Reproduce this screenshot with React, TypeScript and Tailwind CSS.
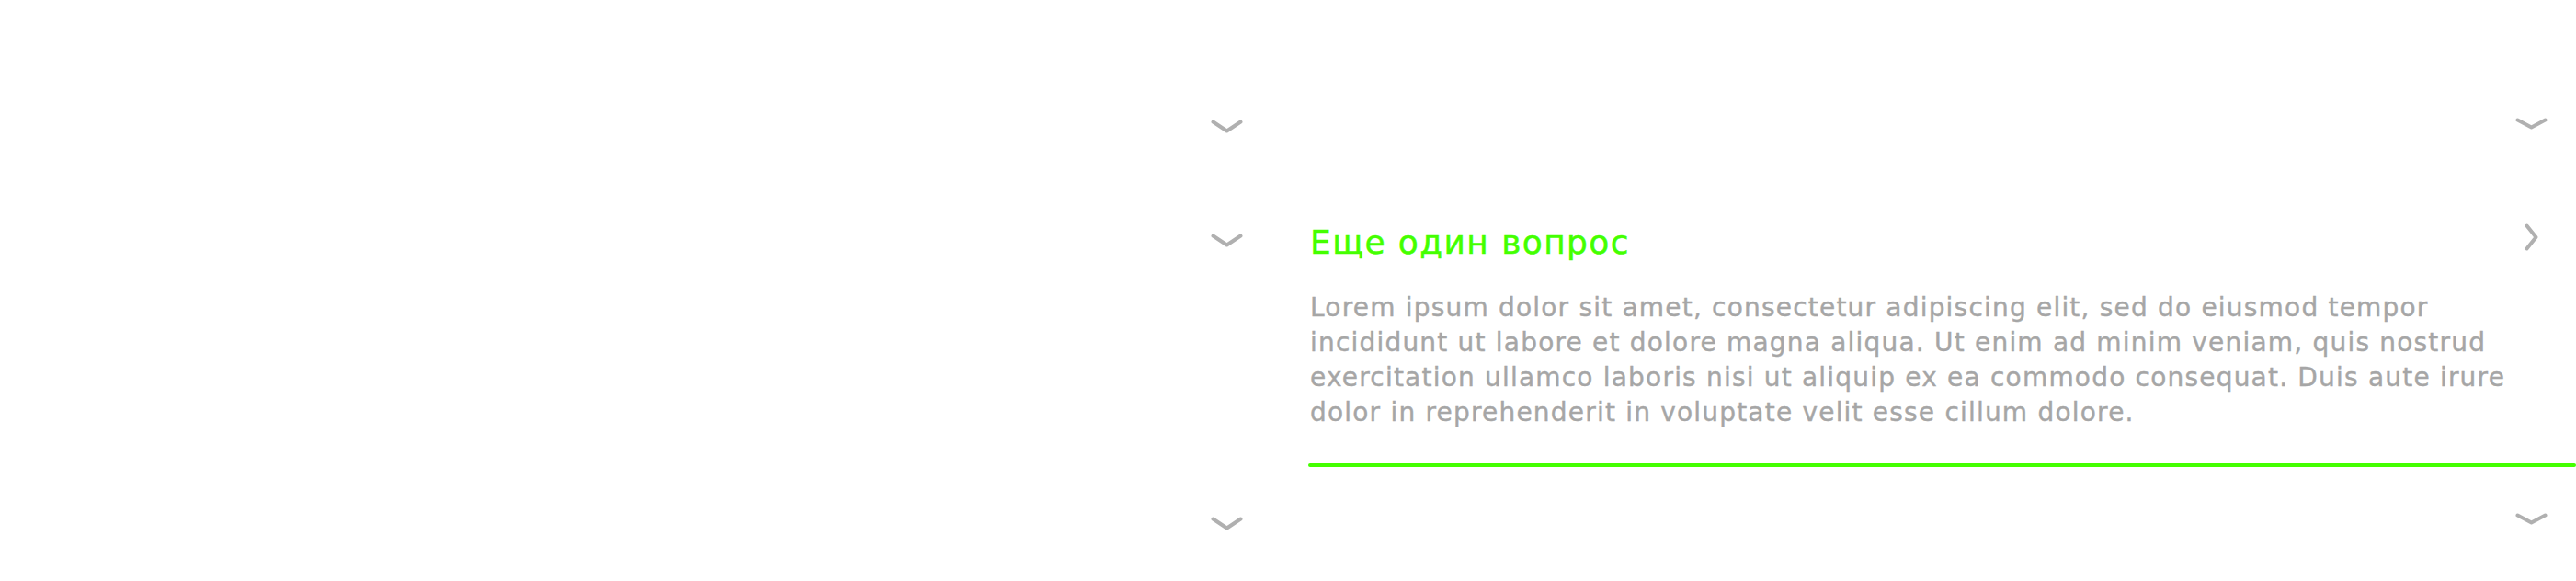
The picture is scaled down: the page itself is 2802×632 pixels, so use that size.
import React from "react";

const GRAY = "#b0b0b0";

function ChevronDown({ h = 15 }: { h?: number }) {
  return (
    <svg width={35} height={h} viewBox={`0 0 35 ${h}`} fill="none">
      <path
        d={`M2.5 2.5 L17.5 ${h - 2.5} L32.5 2.5`}
        stroke={GRAY}
        strokeWidth={4}
        strokeLinecap="round"
        strokeLinejoin="round"
      />
    </svg>
  );
}

function ChevronRight() {
  return (
    <svg width={15} height={30} viewBox="0 0 15 30" fill="none">
      <path
        d="M2.5 2.5 L12.5 15 L2.5 27.5"
        stroke={GRAY}
        strokeWidth={4}
        strokeLinecap="round"
        strokeLinejoin="round"
      />
    </svg>
  );
}

const lines = [
  "Lorem ipsum dolor sit amet, consectetur adipiscing elit, sed do eiusmod tempor",
  "incididunt ut labore et dolore magna aliqua. Ut enim ad minim veniam, quis nostrud",
  "exercitation ullamco laboris nisi ut aliquip ex ea commodo consequat. Duis aute irure",
  "dolor in reprehenderit in voluptate velit esse cillum dolore.",
];

export default function App() {
  return (
    <div
      className="flex w-[2802px] h-[632px] bg-white overflow-hidden"
      style={{ fontFamily: '"DejaVu Sans", "Noto Sans", sans-serif' }}
    >
      {/* left column */}
      <div className="w-[1401px] flex flex-col items-end pr-[49px] pt-[130px]">
        <ChevronDown h={15} />
        <div className="mt-[109px]">
          <ChevronDown h={15} />
        </div>
        <div className="mt-[293px]">
          <ChevronDown h={15} />
        </div>
      </div>

      {/* right column */}
      <div className="flex-1 pl-[22px] pt-[104px]">
        <div className="flex items-center justify-end h-[60px] pr-[31px]">
          <div className="w-[35px] flex justify-center">
            <ChevronDown h={13} />
          </div>
        </div>

        <div className="mt-[65px]">
          <div className="flex items-center justify-between h-[60px] pr-[31px]">
            <span className="mt-[10px] text-[36px] leading-[36px] tracking-[1.4px] text-[#44ff00] [-webkit-text-stroke:0.5px_#44ff00] whitespace-nowrap pl-[2px]">
              Еще один вопрос
            </span>
            <div className="w-[35px] flex justify-center -translate-y-[1px]">
              <ChevronRight />
            </div>
          </div>
          <p className="mt-[27px] text-[28px] leading-[38px] tracking-[1.2px] text-[#a6a6a6] [-webkit-text-stroke:0.4px_#a6a6a6] whitespace-nowrap pl-[2px]">
            {lines.map((l, i) => (
              <React.Fragment key={i}>
                {l}
                {i < lines.length - 1 && <br />}
              </React.Fragment>
            ))}
          </p>
          <div className="mt-[36px] h-[4px] rounded-full bg-[#44ff00]" />
        </div>

        <div className="mt-[26px] flex items-center justify-end h-[60px] pr-[31px]">
          <div className="w-[35px] flex justify-center">
            <ChevronDown h={13} />
          </div>
        </div>
      </div>
    </div>
  );
}
